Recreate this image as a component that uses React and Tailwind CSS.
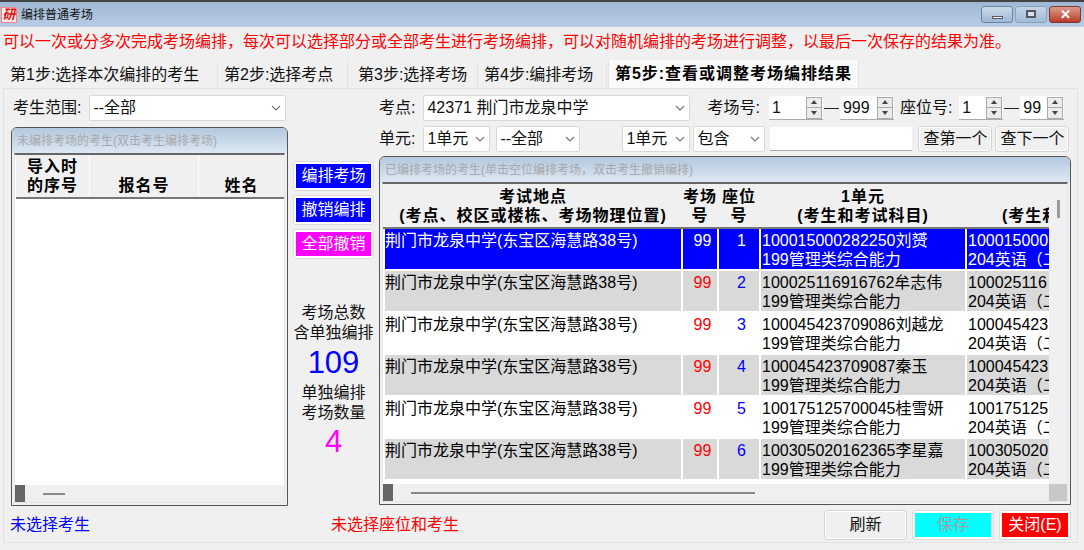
import React from 'react'

const FONT = "font-['Liberation_Sans','Noto_Sans_CJK_SC',sans-serif]"

const TABS = [
  { label: '第1步:选择本次编排的考生', w: 'w-[215px]', pad: 'pl-[7px]' },
  { label: '第2步:选择考点', w: 'w-[129px]', pad: 'pl-[5px]' },
  { label: '第3步:选择考场', w: 'w-[129px]', pad: 'pl-[9px]' },
  { label: '第4步:编排考场', w: 'w-[128px]', pad: 'pl-[5px]' },
]

const ROWS = [
  { no: '100015000282250', name: '刘赟', short: '100015000', seat: 1 },
  { no: '100025116916762', name: '牟志伟', short: '100025116', seat: 2 },
  { no: '100045423709086', name: '刘越龙', short: '100045423', seat: 3 },
  { no: '100045423709087', name: '秦玉', short: '100045423', seat: 4 },
  { no: '100175125700045', name: '桂雪妍', short: '100175125', seat: 5 },
  { no: '100305020162365', name: '李星嘉', short: '100305020', seat: 6 },
]

function Chevron() {
  return (
    <svg width="10" height="6" viewBox="0 0 10 6" className="shrink-0">
      <path d="M1 1l4 4 4-4" fill="none" stroke="#777" strokeWidth="1.2" />
    </svg>
  )
}

function Select({ value, className = '' }) {
  return (
    <div className={`h-[26px] bg-white border border-[#d9d9d9] rounded-[2px] flex items-center justify-between pl-[3px] pr-[4px] whitespace-nowrap overflow-hidden ${className}`}>
      <span>{value}</span>
      <Chevron />
    </div>
  )
}

function Spinner({ value, className = '' }) {
  return (
    <div className={`h-[24px] bg-white border-b border-[#aaa] flex items-center justify-between pl-[3px] pr-px ${className}`}>
      <span>{value}</span>
      <div className="w-[16px] h-[22px] flex flex-col gap-px bg-[#aaa] border border-[#aaa]">
        <div className="flex-1 bg-[#ececec] flex items-center justify-center">
          <div className="w-0 h-0 border-x-[3px] border-x-transparent border-b-[4px] border-b-[#444]" />
        </div>
        <div className="flex-1 bg-[#ececec] flex items-center justify-center">
          <div className="w-0 h-0 border-x-[3px] border-x-transparent border-t-[4px] border-t-[#444]" />
        </div>
      </div>
    </div>
  )
}

function Dash() {
  return <div className="w-[15px] h-px bg-[#222] mx-px shrink-0" />
}

function ColorButton({ label, bg }) {
  return (
    <div className="h-[30px] w-[81px] border border-[#dcdcdc] rounded-[3px] bg-white p-[2px] mb-[4px]">
      <div className={`h-full ${bg} text-white flex items-center justify-center`}>{label}</div>
    </div>
  )
}

function GrayButton({ label, className = '' }) {
  return (
    <div className={`border border-[#d4d4d4] rounded-[4px] bg-[#f0f0f0] shadow-[inset_0_0_0_1px_#fff] flex items-center justify-center ${className}`}>
      {label}
    </div>
  )
}

function Panel({ title, className = '', children }) {
  return (
    <div className={`border border-[#555] rounded-t-[6px] flex flex-col overflow-hidden ${className}`}>
      <div className="h-[25px] shrink-0 bg-gradient-to-b from-[#b4c8de] to-[#dce8f3] text-[12px] text-[#a8a8a8] pl-[5px] flex items-center">
        {title}
      </div>
      <div className="flex-1 min-h-0 mx-[2px] mb-[2px] border-t-2 border-[#666] border-x border-b border-x-[#dfe8f0] border-b-[#dfe8f0] flex flex-col bg-white">
        {children}
      </div>
    </div>
  )
}

function HScroll({ lineClass }) {
  return (
    <div className="h-[17px] shrink-0 bg-[#efefef] flex items-center">
      <div className="w-[10px] h-full bg-[#666] shrink-0" />
      <div className={`h-[2px] bg-[#888] ${lineClass}`} />
    </div>
  )
}

function HeadCell({ className = '', children }) {
  return (
    <div className={`shrink-0 font-bold text-center text-black tracking-[1px] leading-[19px] flex flex-col justify-end pb-[2px] whitespace-nowrap ${className}`}>
      <div>{children}</div>
    </div>
  )
}

function ResultRow({ row, index }) {
  const selected = index === 0
  const bg = selected ? 'bg-[#0000ff]' : index % 2 === 1 ? 'bg-[#d9d9d9]' : 'bg-white'
  const text = selected ? 'text-white' : 'text-black'
  const cell = `${bg} ${selected ? 'text-white' : ''} h-[40px] shrink-0 leading-[19px] pt-[2px] overflow-hidden whitespace-nowrap`
  return (
    <div className={`flex gap-[2px] h-[42px] pl-[2px] ${text}`}>
      <div className={`${cell} w-[296px]`}>荆门市龙泉中学(东宝区海慧路38号)</div>
      <div className={`${cell} w-[34px] text-center pl-[5px] ${selected ? '' : 'text-[#ff0000]'}`}>99</div>
      <div className={`${cell} w-[40px] text-center pl-[5px] ${selected ? '' : 'text-[#0000ff]'}`}>{row.seat}</div>
      <div className={`${cell} w-[204px] pl-px`}>
        {row.no}{row.name}
        <br />
        199管理类综合能力
      </div>
      <div className={`${cell} flex-1 pl-px`}>
        {row.short}
        <br />
        204英语（二）
      </div>
    </div>
  )
}

export default function App() {
  return (
    <div className={`${FONT} w-[1084px] h-[550px] bg-[#f0f0f0] text-[16px] text-[#111] overflow-hidden flex flex-col`}>
      {/* title bar */}
      <div className="h-[27px] shrink-0 border-t-2 border-t-[#444] bg-gradient-to-b from-[#9fb8d5] to-[#b9cde4] flex items-center pl-[1px] pr-[3px]">
        <div className="w-[16px] h-[16px] bg-[#fbe8e4] border border-[#e88] text-[#e01010] text-[13px] leading-[14px] italic font-bold text-center overflow-hidden">研</div>
        <div className="ml-[4px] text-[12px] text-[#111]">编排普通考场</div>
        <div className="ml-auto flex gap-[2px] -mt-[1px]">
          <div className="w-[32px] h-[17px] rounded-[3px] border border-[#6d84a0] bg-gradient-to-b from-[#cbdaeb] to-[#9db7d4] flex items-end justify-center pb-[3px]">
            <div className="w-[11px] h-[3px] bg-white border border-[#556]" />
          </div>
          <div className="w-[32px] h-[17px] rounded-[3px] border border-[#8ba1ba] bg-gradient-to-b from-[#c3d4e7] to-[#a3bcd7] flex items-center justify-center">
            <div className="w-[10px] h-[8px] bg-[#d5deea] border-2 border-[#556]" />
          </div>
          <div className="w-[32px] h-[17px] rounded-[3px] border border-[#7a3a30] bg-gradient-to-b from-[#dc9a8a] to-[#b83a28] flex items-center justify-center text-white text-[13px] leading-none font-bold">✕</div>
        </div>
      </div>

      {/* notice */}
      <div className="h-[33px] shrink-0 pl-[3px] pt-[4px] text-[#ff0000] leading-[22px] whitespace-nowrap">
        可以一次或分多次完成考场编排，每次可以选择部分或全部考生进行考场编排，可以对随机编排的考场进行调整，以最后一次保存的结果为准。
      </div>

      {/* tabs */}
      <div className="h-[28px] shrink-0 flex items-end pl-[3px] gap-px">
        {TABS.map(t => (
          <div key={t.label} className={`${t.w} ${t.pad} h-[27px] bg-[#f0f0f0] border-r border-[#e4e4e4] flex items-center whitespace-nowrap`}>
            {t.label}
          </div>
        ))}
        <div className="w-[251px] h-[28px] bg-[#fafafa] font-bold tracking-[1px] text-black border-x border-[#e4e4e4] flex items-center justify-center whitespace-nowrap">
          第5步:查看或调整考场编排结果
        </div>
      </div>

      {/* tab page */}
      <div className="w-[1075px] h-[455px] ml-[3px] shrink-0 border border-[#e2e2e2] pl-[7px] pt-[6px] flex flex-col">
        <div className="flex gap-[5px] h-[411px] shrink-0">
          {/* left column */}
          <div className="w-[277px] flex flex-col shrink-0">
            <div className="h-[26px] flex items-center gap-[8px] pl-[2px] whitespace-nowrap mb-[6px]">
              考生范围:
              <Select value="--全部" className="w-[197px]" />
            </div>
            <Panel title="未编排考场的考生(双击考生编排考场)" className="h-[379px]">
              <div className="h-[44px] shrink-0 flex bg-[#f0f0f0] border-b-2 border-[#777] ml-px">
                <HeadCell className="w-[74px] border-r border-white">导入时<br />的序号</HeadCell>
                <HeadCell className="w-[109px] border-r border-white">报名号</HeadCell>
                <HeadCell className="flex-1">姓名</HeadCell>
              </div>
              <div className="flex-1" />
              <HScroll lineClass="w-[22px] ml-[18px]" />
            </Panel>
          </div>

          {/* middle column */}
          <div className="w-[81px] shrink-0 flex flex-col items-center pt-[66px] text-center">
            <ColorButton label="编排考场" bg="bg-[#0000ff]" />
            <ColorButton label="撤销编排" bg="bg-[#0000ff]" />
            <ColorButton label="全部撤销" bg="bg-[#ff00ff]" />
            <div className="mt-[40px] leading-[20px] whitespace-nowrap">考场总数<br />含单独编排</div>
            <div className="text-[31px] leading-[40px] text-[#0000ff]">109</div>
            <div className="leading-[20px] whitespace-nowrap">单独编排<br />考场数量</div>
            <div className="text-[31px] leading-[38px] text-[#ff00ff]">4</div>
          </div>

          {/* right column */}
          <div className="w-[692px] shrink-0 flex flex-col">
            <div className="h-[26px] flex items-center whitespace-nowrap">
              考点:
              <Select value="42371 荆门市龙泉中学" className="w-[267px] ml-[8px]" />
              <span className="ml-[17px]">考场号:</span>
              <Spinner value="1" className="w-[54px] ml-[9px]" />
              <Dash />
              <Spinner value="999" className="w-[54px]" />
              <span className="ml-[6px]">座位号:</span>
              <Spinner value="1" className="w-[44px] ml-[7px]" />
              <Dash />
              <Spinner value="99" className="w-[44px]" />
            </div>
            <div className="h-[26px] mt-[5px] flex items-center whitespace-nowrap">
              单元:
              <Select value="1单元" className="w-[67px] ml-[8px]" />
              <Select value="--全部" className="w-[84px] ml-[6px]" />
              <Select value="1单元" className="w-[68px] ml-[42px]" />
              <Select value="包含" className="w-[72px] ml-[3px]" />
              <div className="w-[142px] h-[24px] bg-white border-b border-[#aaa] ml-[5px]" />
              <GrayButton label="查第一个" className="w-[74px] h-[26px] ml-[6px]" />
              <GrayButton label="查下一个" className="w-[74px] h-[26px] ml-[3px]" />
            </div>
            <Panel title="已编排考场的考生(单击空位编排考场，双击考生撤销编排)" className="h-[349px] mt-[4px]">
              <div className="flex-1 min-h-0 flex">
                <div className="flex-1 min-w-0 flex flex-col overflow-hidden">
                  <div className="h-[45px] shrink-0 flex gap-[2px] pl-[2px] bg-[#f0f0f0] border-b-2 border-[#777]">
                    <HeadCell className="w-[296px]">考试地点<br />(考点、校区或楼栋、考场物理位置)</HeadCell>
                    <HeadCell className="w-[34px]">考场<br />号</HeadCell>
                    <HeadCell className="w-[40px]">座位<br />号</HeadCell>
                    <HeadCell className="w-[204px]">1单元<br />(考生和考试科目)</HeadCell>
                    <HeadCell className="flex-1 items-start pl-[35px]">&nbsp;<br />(考生和考试科目)</HeadCell>
                  </div>
                  <div className="flex-1 overflow-hidden">
                    {ROWS.map((row, i) => (
                      <ResultRow key={row.seat} row={row} index={i} />
                    ))}
                  </div>
                </div>
                <div className="w-[18px] shrink-0 bg-[#f0f0f0] pt-[16px] flex justify-center">
                  <div className="w-[3px] h-[18px] bg-[#999]" />
                </div>
              </div>
              <div className="h-[17px] shrink-0 bg-[#efefef] flex items-center">
                <div className="w-[10px] h-full bg-[#666] shrink-0" />
                <div className="h-[2px] bg-[#888] w-[344px] ml-[18px]" />
                <div className="ml-auto w-[18px] h-full bg-[#c8c8c8]" />
              </div>
            </Panel>
          </div>
        </div>

        {/* footer */}
        <div className="flex-1 flex items-center pt-px pr-[6px] -ml-px whitespace-nowrap">
          <span className="text-[#0000ff] w-[321px]">未选择考生</span>
          <span className="text-[#ff0000]">未选择座位和考生</span>
          <GrayButton label="刷新" className="w-[83px] h-[30px] ml-auto" />
          <div className="w-[82px] h-[30px] ml-[5px] border border-[#dcdcdc] rounded-[3px] bg-white p-[2px]">
            <div className="h-full bg-[#00ffff] text-[#a0a0a0] flex items-center justify-center">保存</div>
          </div>
          <div className="w-[72px] h-[30px] ml-[5px] border border-[#dcdcdc] rounded-[3px] bg-white p-[2px]">
            <div className="h-full bg-[#ff0000] text-white flex items-center justify-center">关闭(E)</div>
          </div>
        </div>
      </div>
    </div>
  )
}
